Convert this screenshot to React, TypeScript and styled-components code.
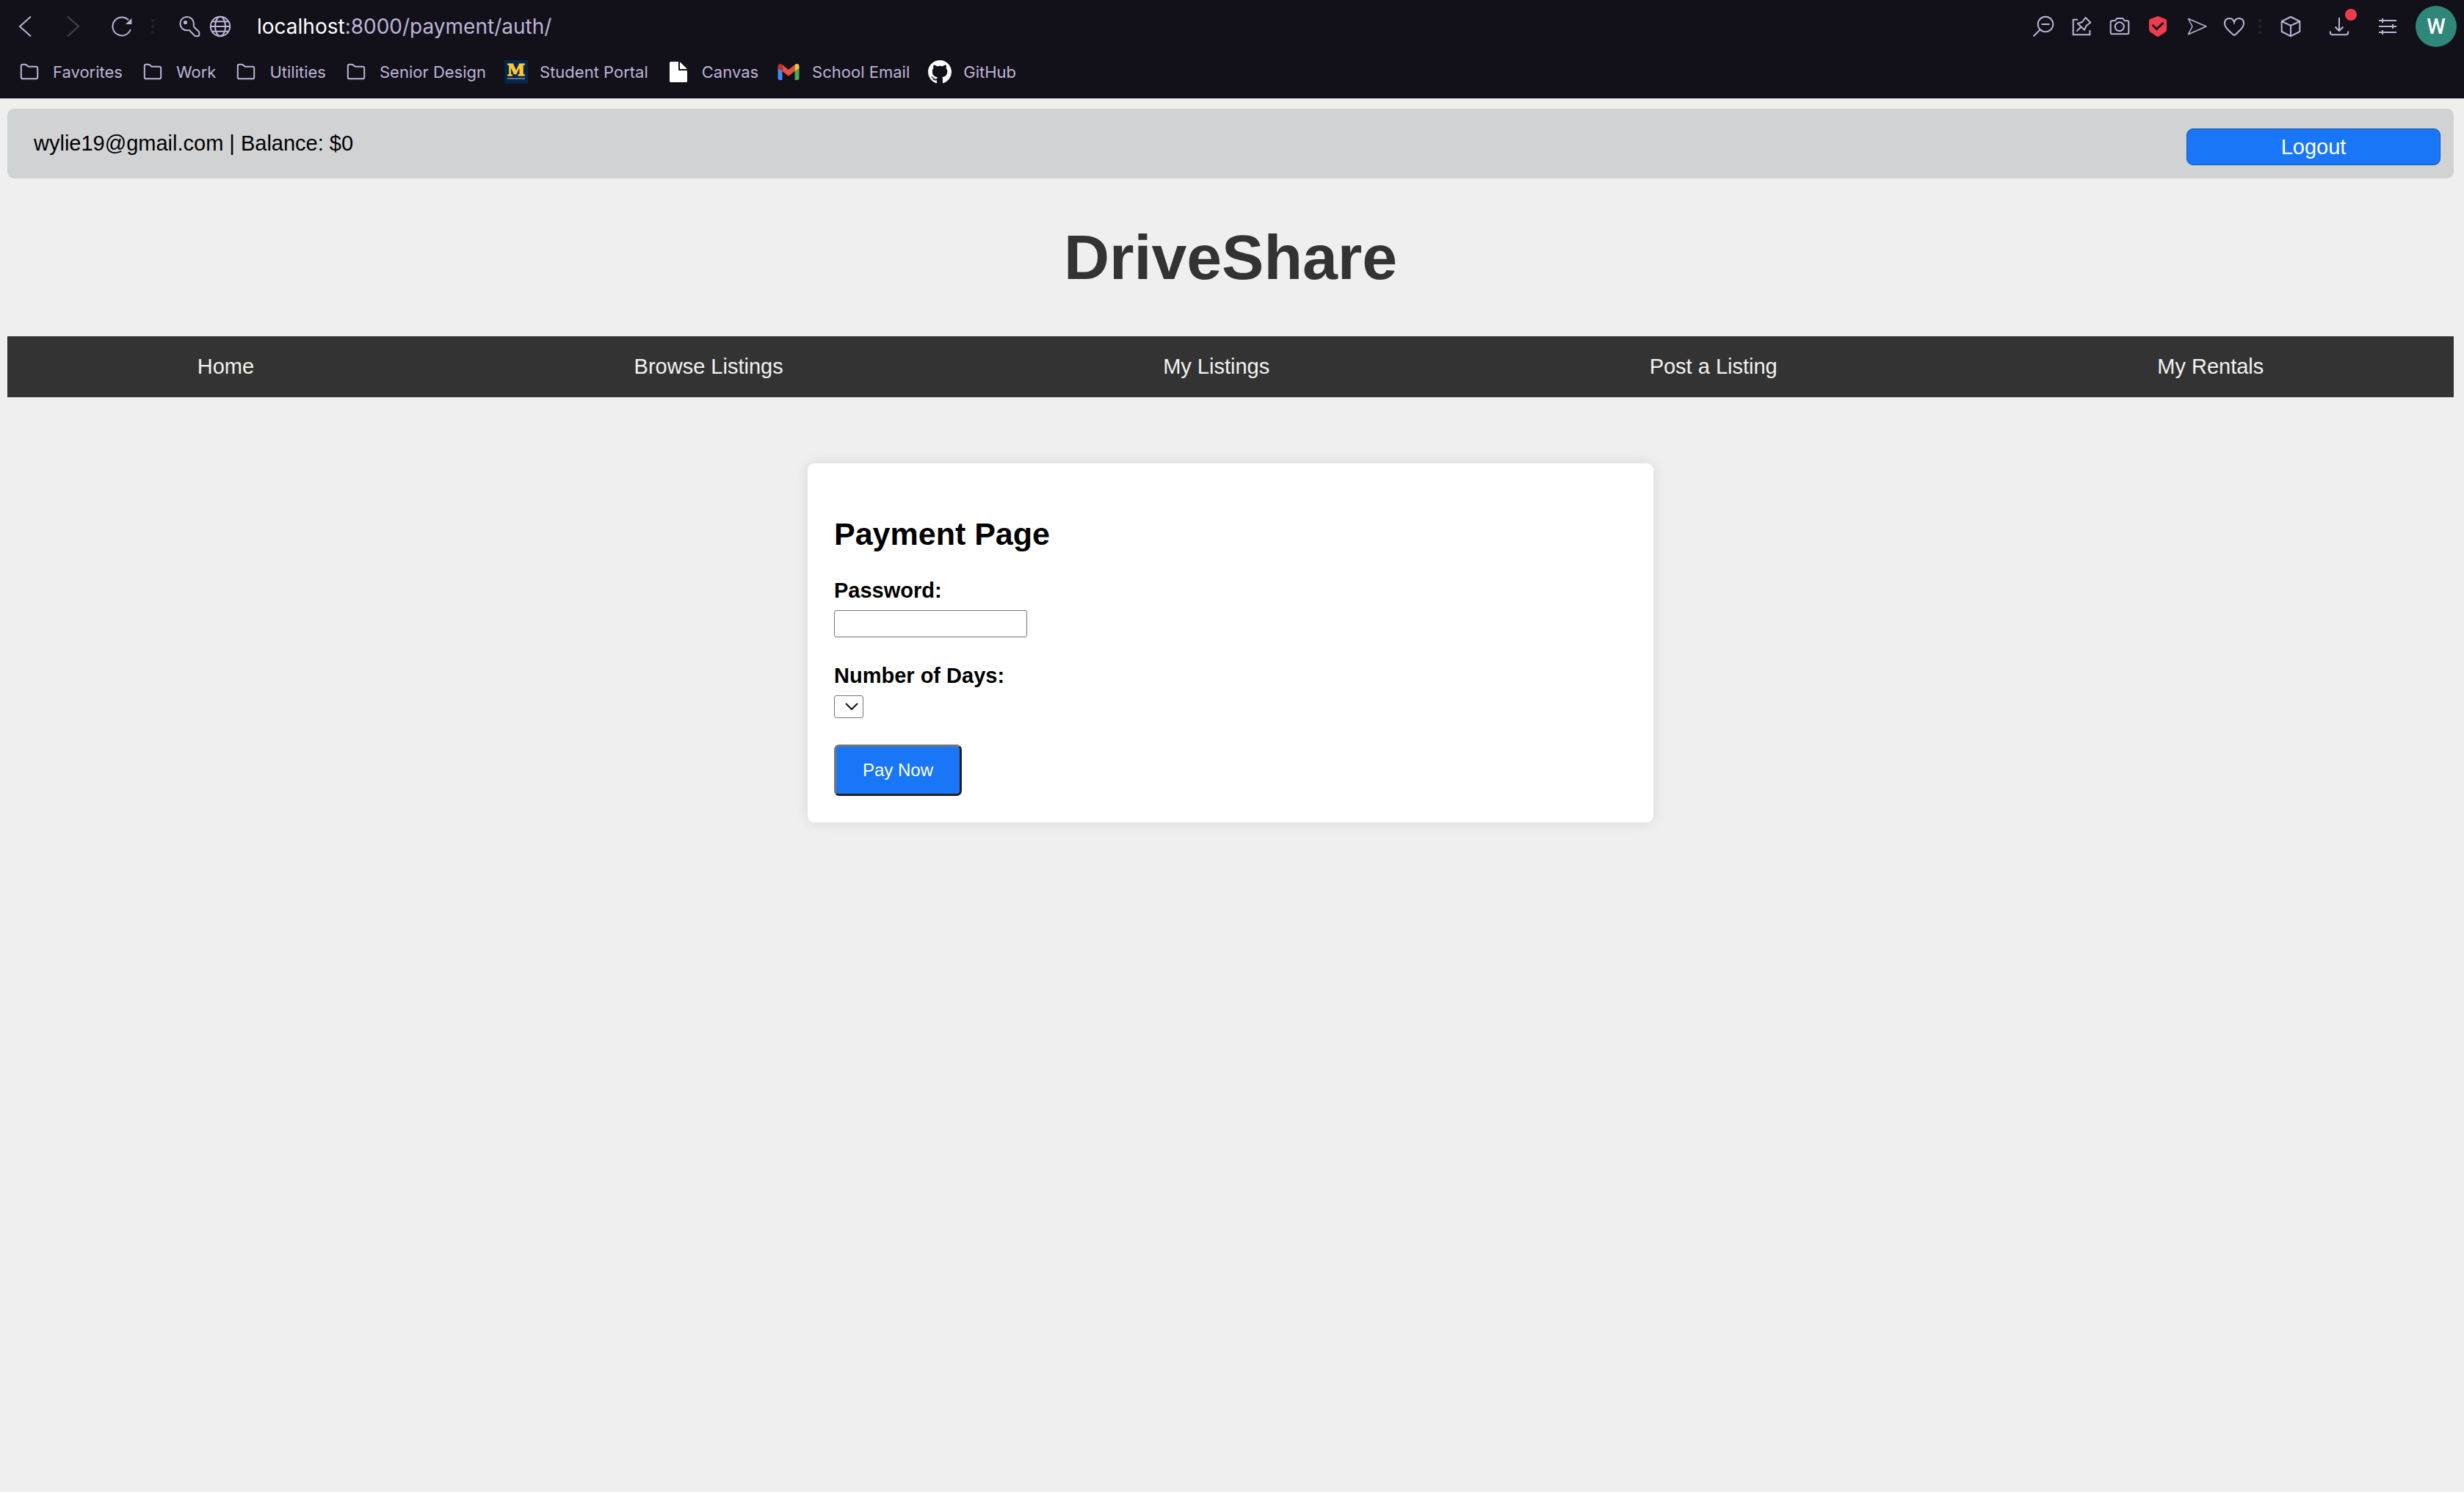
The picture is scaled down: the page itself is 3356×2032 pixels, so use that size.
import React, { useState } from 'react';
import styled, { createGlobalStyle } from 'styled-components';

const GlobalStyle = createGlobalStyle`
  *, *::before, *::after { box-sizing: border-box; }
  body { margin: 0; background: #efefef; }
  button, input, select { margin: 0; font-family: inherit; }
`;

const Screen = styled.div`
  min-height: 100vh;
  display: flex;
  flex-direction: column;
  background: #efefef;
  font-family: Arial, "Liberation Sans", sans-serif;
`;

/* ---------- Browser chrome ---------- */

const Chrome = styled.header`
  height: 134px;
  background: #121019;
  color: #bdb4d6;
  font-family: Inter, sans-serif;
`;

const Toolbar = styled.div`
  display: flex;
  align-items: center;
  justify-content: space-between;
  height: 72px;
  padding: 0 10px 0 2px;
`;

const ToolGroup = styled.div`
  display: flex;
  align-items: center;
`;

const Tools = styled.div`
  display: flex;
  align-items: center;
  gap: 2px;
`;

const ToolButton = styled.button<{ $width: number; $dim?: boolean }>`
  display: flex;
  align-items: center;
  justify-content: center;
  position: relative;
  width: ${(p) => p.$width}px;
  height: 56px;
  padding: 0;
  border: 0;
  background: none;
  color: ${(p) => (p.$dim ? '#474451' : '#bdb4d6')};
`;

const Dots = styled.span<{ $after: number }>`
  display: grid;
  gap: 4px;
  margin: 0 ${(p) => p.$after}px 0 8px;

  i {
    width: 4px;
    height: 4px;
    background: #211f30;
  }
`;

const Address = styled.div`
  padding-left: 30px;
  font-size: 28px;
  line-height: 36px;

  b {
    font-weight: 400;
    color: #fff;
  }
`;

const Badge = styled.span`
  position: absolute;
  top: 4px;
  right: 8px;
  width: 16px;
  height: 16px;
  border-radius: 50%;
  background: #ef3b50;
`;

const Avatar = styled.button`
  width: 56px;
  height: 56px;
  margin-left: 6px;
  padding: 0;
  border: 0;
  border-radius: 50%;
  background: #2f8779;
  color: #fff;
  font-family: Roboto, sans-serif;
  font-size: 29px;
  font-weight: 500;
  line-height: 56px;
  text-align: center;
`;

const Bookmarks = styled.nav`
  display: flex;
  align-items: center;
  gap: 25px;
  height: 52px;
  padding: 0 24px;
`;

const Bookmark = styled.a`
  display: flex;
  align-items: center;
  gap: 16px;
  color: inherit;
  font-size: 22px;
  line-height: 32px;
  text-decoration: none;
  white-space: nowrap;
`;

const Crest = styled.span`
  display: flex;
  flex-direction: column;
  align-items: center;
  gap: 2px;
  width: 32px;
  height: 32px;
  padding-top: 4px;
  background: #05254a;
  color: #ffcb2f;
  font-family: "DejaVu Serif", serif;
  font-size: 22px;
  font-weight: 700;
  line-height: 18px;
  -webkit-text-stroke: 1px #ffcb2f;

  &::after {
    content: '';
    width: 24px;
    height: 2px;
    background: #63758c;
  }
`;

const Icon = ({ children, stroke = 2 }: { children: React.ReactNode; stroke?: number }) => (
  <svg width="32" height="32" viewBox="0 0 32 32" fill="none" stroke="currentColor" strokeWidth={stroke} aria-hidden="true">
    {children}
  </svg>
);

const FolderIcon = () => (
  <Icon>
    <path d="M4.8 8Q4.8 5.8 7 5.8H10Q11 5.8 11.8 6.4L14 8.1Q15 8.8 16 8.8H25Q27.2 8.8 27.2 11V23.2Q27.2 25.3 25 25.3H7Q4.8 25.3 4.8 23.2Z" />
  </Icon>
);

const FileIcon = () => (
  <Icon>
    <path d="M4 3.500Q4 2 5.500 2H16V14H28V28.500Q28 30 26.500 30H5.500Q4 30 4 28.500Z" fill="#fff" stroke="none" />
    <path d="M18 2.300L28 12H18Z" fill="#fff" stroke="none" />
  </Icon>
);

const MailIcon = () => (
  <Icon>
    <g stroke="none">
      <path d="M1.500 10L7.500 14V27H3.500Q1.500 27 1.500 25Z" fill="#4a86f0" />
      <path d="M24.500 14L30.500 10V25Q30.500 27 28.500 27H24.500Z" fill="#4fa65b" />
      <path d="M7.500 6L16 13L24.500 6V15L16 21.500L7.500 15Z" fill="#e4513e" />
      <path d="M1.500 11V8.500Q1.500 5 4.500 5Q6 5 7.500 6.300V15Z" fill="#bd3127" />
      <path d="M30.500 11V8.500Q30.500 5 27.500 5Q26 5 24.500 6.300V15Z" fill="#f6c23e" />
    </g>
  </Icon>
);

const GitHubIcon = () => (
  <svg width="32" height="32" viewBox="0 0 16 16" fill="#fff" aria-hidden="true">
    <path d="M8 0c4.42 0 8 3.58 8 8a8.013 8.013 0 0 1-5.45 7.59c-.4.08-.55-.17-.55-.38 0-.27.01-1.13.01-2.2 0-.75-.25-1.23-.54-1.48 1.78-.2 3.65-.88 3.65-3.95 0-.88-.31-1.59-.82-2.15.08-.2.36-1.02-.08-2.12 0 0-.67-.22-2.2.82-.64-.18-1.32-.27-2-.27-.68 0-1.36.09-2 .27-1.53-1.03-2.2-.82-2.2-.82-.44 1.1-.16 1.92-.08 2.12-.51.56-.82 1.28-.82 2.15 0 3.06 1.86 3.75 3.64 3.95-.23.2-.44.55-.51 1.07-.46.21-1.61.55-2.33-.66-.15-.24-.6-.83-1.23-.82-.67.01-.27.38.01.53.34.19.73.9.82 1.13.16.45.68 1.31 2.69.94 0 .67.01 1.3.01 1.49 0 .21-.15.45-.55.38A7.995 7.995 0 0 1 0 8c0-4.42 3.58-8 8-8Z" />
  </svg>
);

const bookmarks: { label: string; icon: React.ReactNode }[] = [
  { label: 'Favorites', icon: <FolderIcon /> },
  { label: 'Work', icon: <FolderIcon /> },
  { label: 'Utilities', icon: <FolderIcon /> },
  { label: 'Senior Design', icon: <FolderIcon /> },
  { label: 'Student Portal', icon: <Crest aria-hidden="true">M</Crest> },
  { label: 'Canvas', icon: <FileIcon /> },
  { label: 'School Email', icon: <MailIcon /> },
  { label: 'GitHub', icon: <GitHubIcon /> },
];

const Separator = ({ after }: { after: number }) => (
  <Dots $after={after} aria-hidden="true">
    <i />
    <i />
    <i />
  </Dots>
);

const BrowserChrome = () => (
  <Chrome>
    <Toolbar>
      <ToolGroup>
        <Tools>
          <ToolButton $width={64} aria-label="Back">
            <Icon><path d="M24 2.500L9 16L24 29.500" /></Icon>
          </ToolButton>
          <ToolButton $width={64} $dim aria-label="Forward">
            <Icon><path d="M8 2.500L23 16L8 29.500" /></Icon>
          </ToolButton>
          <ToolButton $width={64} aria-label="Reload">
            <Icon>
              <path d="M27.800 20A12.500 12.500 0 1 1 25 7.300" />
              <path d="M29.300 5V13H21Z" fill="currentColor" stroke="none" />
            </Icon>
          </ToolButton>
        </Tools>
        <Separator after={28} />
        <Tools>
          <ToolButton $width={40} aria-label="Passwords">
            <Icon>
              <path d="M12.700 21.300H16L23 28.500Q24 29.300 25 29.300H27Q29.300 29.300 29.300 27V24.500Q29.300 23.500 28.500 22.700L22.500 17Q21.800 16.200 21.800 15V12.100A9.200 9.200 0 1 0 12.700 21.300Z" />
              <circle cx="10.500" cy="10.500" r="2.600" fill="currentColor" stroke="none" />
            </Icon>
          </ToolButton>
          <ToolButton $width={40} aria-label="Site information">
            <Icon>
              <circle cx="16" cy="16" r="13.200" />
              <ellipse cx="16" cy="16" rx="7" ry="13.200" />
              <path d="M2.800 16H29.200M4.800 9.300H27.200M4.800 22.700H27.200" />
            </Icon>
          </ToolButton>
        </Tools>
        <Address>
          <b>localhost</b>:8000/payment/auth/
        </Address>
      </ToolGroup>
      <ToolGroup>
        <Tools>
          <ToolButton $width={50} aria-label="Zoom out">
            <Icon>
              <circle cx="19" cy="13" r="10.300" />
              <path d="M13.500 13H24.500M11.500 20.500L2.500 29.500" />
            </Icon>
          </ToolButton>
          <ToolButton $width={50} aria-label="Pin page">
            <Icon>
              <path d="M11 6.800H4.700V27.300H27.400V21" />
              <path d="M21.500 4L28.300 10.800L22.500 15L20 20.800L10.800 12L17 10Z" strokeLinejoin="round" />
              <path d="M15.500 16.500L9.500 22.500" />
            </Icon>
          </ToolButton>
          <ToolButton $width={50} aria-label="Snapshot">
            <Icon>
              <path d="M5.500 8.200H9Q10 8.200 10.600 7.200L11.400 6Q12 5 13 5H19.500Q20.500 5 21.100 6L21.900 7.200Q22.500 8.200 23.500 8.200H26.500Q28.300 8.200 28.300 10V24.500Q28.300 26.300 26.500 26.300H5.500Q3.700 26.300 3.700 24.500V10Q3.700 8.200 5.500 8.200Z" />
              <circle cx="15.800" cy="16.300" r="6" />
            </Icon>
          </ToolButton>
          <ToolButton $width={50} aria-label="Ad blocker">
            <Icon>
              <path d="M14.500 2.500Q16 1.700 17.500 2.500L26.500 6Q28 6.700 28 8.500V20Q28 22.500 26.500 23.600L18 29.300Q16 30.500 14 29.300L5.500 23.600Q4 22.500 4 20V8.500Q4 6.700 5.500 6Z" fill="#ef3b50" stroke="none" />
              <path d="M8.500 14L14.500 19.500L23.500 10.800" stroke="#121019" strokeWidth="3" />
            </Icon>
          </ToolButton>
          <ToolButton $width={50} aria-label="Send to my devices">
            <Icon stroke={1.5}>
              <path d="M5.500 5.500L30 16L5.500 26.700L11 16Z" strokeLinejoin="round" />
            </Icon>
          </ToolButton>
          <ToolButton $width={50} aria-label="Save">
            <Icon>
              <path d="M16 28Q14.500 27.500 8 21Q3 16 3 12Q3 5 9.500 5Q14.500 5 16 10.500Q17.500 5 22.500 5Q29 5 29 12Q29 16 24 21Q17.500 27.500 16 28Z" />
            </Icon>
          </ToolButton>
        </Tools>
        <Separator after={8} />
        <Tools>
          <ToolButton $width={64} aria-label="Extensions">
            <Icon>
              <path d="M16 3L28.300 9V23L16 29.300L3.700 23V9ZM3.700 9L16 14.800L28.300 9M16 14.800V29" strokeLinejoin="round" />
            </Icon>
          </ToolButton>
          <ToolButton $width={64} aria-label="Downloads">
            <Icon>
              <path d="M16 4V22M10.500 16.500L16 22L21.500 16.500M3.800 22.500V24Q3.800 27.300 7 27.300H25Q28.200 27.300 28.200 24V22.500" />
            </Icon>
            <Badge />
          </ToolButton>
          <ToolButton $width={64} aria-label="Easy setup">
            <Icon>
              <path d="M4 8H28M4 16H28M4 24H28M9 5V11M23 13V19M9 21V27" />
            </Icon>
          </ToolButton>
        </Tools>
        <Avatar aria-label="Profile W">W</Avatar>
      </ToolGroup>
    </Toolbar>
    <Bookmarks aria-label="Bookmarks">
      {bookmarks.map((b) => (
        <Bookmark key={b.label} href="#">
          {b.icon}
          {b.label}
        </Bookmark>
      ))}
    </Bookmarks>
  </Chrome>
);

/* ---------- DriveShare page ---------- */

const Page = styled.div`
  padding: 14px 14px 14px 10px;
  font-size: 29px;
  line-height: 33px;
  color: #000;
`;

const AccountBar = styled.div`
  display: flex;
  justify-content: space-between;
  align-items: flex-start;
  padding: 27px 18px 18px 36px;
  border-radius: 9px;
  background: #d1d2d4;
`;

const AccountInfo = styled.span`
  line-height: 40px;
`;

const LogoutButton = styled.button`
  width: 346px;
  height: 50px;
  padding: 0;
  border: 1px solid #1453a8;
  border-radius: 9px;
  background: #1977f7;
  color: #fff;
  font-size: 29px;
  line-height: 33px;
`;

const SiteTitle = styled.h1`
  margin: 58px 0;
  color: #333;
  font-size: 86px;
  line-height: 99px;
  text-align: center;
`;

const SiteNav = styled.nav`
  display: flex;
  justify-content: space-around;
  padding: 25px 0;
  background: #333;
`;

const NavLink = styled.a`
  color: #f2f2f2;
  text-decoration: none;
`;

const Card = styled.form`
  display: flex;
  flex-direction: column;
  align-items: flex-start;
  gap: 36px;
  max-width: 1152px;
  margin: 90px auto 0;
  padding: 72px 36px 36px;
  border-radius: 9px;
  background: #fff;
  box-shadow: 0 0 18px rgba(0, 0, 0, 0.1);
`;

const CardTitle = styled.h2`
  margin: 0;
  font-size: 43px;
  line-height: 49px;
`;

const Field = styled.div`
  display: flex;
  flex-direction: column;
  align-items: flex-start;
  gap: 10px;
`;

const Label = styled.label`
  font-weight: 700;
`;

const PasswordInput = styled.input`
  width: 263px;
  height: 37px;
  padding: 0 4px;
  border: 1px solid #767676;
  border-radius: 3px;
  background: #fff;
  font-size: 24px;
`;

const SelectBox = styled.div`
  display: flex;
  position: relative;

  svg {
    position: absolute;
    top: 10px;
    right: 7px;
    pointer-events: none;
  }
`;

const DaysSelect = styled.select`
  appearance: none;
  width: 40px;
  height: 31px;
  padding: 0;
  border: 1px solid #767676;
  border-radius: 3px;
  background: #fff;
`;

const PayButton = styled.button`
  width: 174px;
  height: 70px;
  padding: 0;
  border: 3px solid;
  border-color: #767676 #212121 #212121 #767676;
  border-radius: 7px;
  background: #1977f7;
  color: #fff;
  font-size: 24px;
`;

const links = ['Home', 'Browse Listings', 'My Listings', 'Post a Listing', 'My Rentals'];

export default function App() {
  const [password, setPassword] = useState('');

  return (
    <Screen>
      <GlobalStyle />
      <BrowserChrome />
      <Page>
        <AccountBar>
          <AccountInfo>wylie19@gmail.com | Balance: $0</AccountInfo>
          <LogoutButton type="button">Logout</LogoutButton>
        </AccountBar>
        <SiteTitle>DriveShare</SiteTitle>
        <SiteNav aria-label="Main">
          {links.map((label) => (
            <NavLink key={label} href="#">
              {label}
            </NavLink>
          ))}
        </SiteNav>
        <Card onSubmit={(e) => e.preventDefault()}>
          <CardTitle>Payment Page</CardTitle>
          <Field>
            <Label htmlFor="password">Password:</Label>
            <PasswordInput
              id="password"
              type="password"
              value={password}
              onChange={(e) => setPassword(e.target.value)}
            />
          </Field>
          <Field>
            <Label htmlFor="days">Number of Days:</Label>
            <SelectBox>
              <DaysSelect id="days" />
              <svg width="18" height="11" viewBox="0 0 18 11" fill="none" stroke="#111" strokeWidth="2" aria-hidden="true">
                <path d="M1 1L9 9L17 1" />
              </svg>
            </SelectBox>
          </Field>
          <PayButton type="submit">Pay Now</PayButton>
        </Card>
      </Page>
    </Screen>
  );
}
